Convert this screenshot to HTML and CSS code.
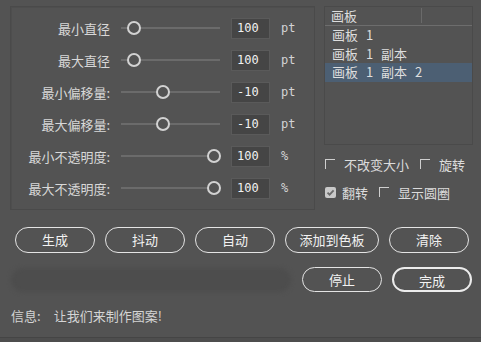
FILE: index.html
```html
<!DOCTYPE html>
<html lang="zh">
<head>
<meta charset="utf-8">
<link rel="stylesheet" href="styles.css">
</head>
<body>
<div class="app">
  <div class="top">
    <div class="params">
      <div class="row">
        <div class="label">最小直径</div>
        <div class="slider"><span class="knob" style="left: 6px"></span></div>
        <div class="field">100</div>
        <div class="unit">pt</div>
      </div>
      <div class="row">
        <div class="label">最大直径</div>
        <div class="slider"><span class="knob" style="left: 6px"></span></div>
        <div class="field">100</div>
        <div class="unit">pt</div>
      </div>
      <div class="row">
        <div class="label">最小偏移量:</div>
        <div class="slider"><span class="knob" style="left: 35px"></span></div>
        <div class="field">-10</div>
        <div class="unit">pt</div>
      </div>
      <div class="row">
        <div class="label">最大偏移量:</div>
        <div class="slider"><span class="knob" style="left: 35px"></span></div>
        <div class="field">-10</div>
        <div class="unit">pt</div>
      </div>
      <div class="row">
        <div class="label">最小不透明度:</div>
        <div class="slider"><span class="knob" style="left: 86px"></span></div>
        <div class="field">100</div>
        <div class="unit">%</div>
      </div>
      <div class="row">
        <div class="label">最大不透明度:</div>
        <div class="slider"><span class="knob" style="left: 86px"></span></div>
        <div class="field">100</div>
        <div class="unit">%</div>
      </div>
    </div>
    <div class="side">
      <div class="list">
        <div class="list-head"><span class="head-cell">画板</span><span class="head-rest"></span></div>
        <div class="item">画板 1</div>
        <div class="item">画板 1 副本</div>
        <div class="item selected">画板 1 副本 2</div>
      </div>
      <div class="checks">
        <div class="check-row">
          <label class="check"><span class="box"></span>不改变大小</label>
          <label class="check second"><span class="box"></span>旋转</label>
        </div>
        <div class="check-row">
          <label class="check"><span class="box checked"><svg viewBox="0 0 11 11" width="11" height="11"><path d="M2.5 5.6 L4.6 7.7 L8.6 3.4" fill="none" stroke="#6a6a6a" stroke-width="1.8"/></svg></span>翻转</label>
          <label class="check third"><span class="box"></span>显示圆圈</label>
        </div>
      </div>
    </div>
  </div>
  <div class="buttons">
    <button class="btn">生成</button>
    <button class="btn">抖动</button>
    <button class="btn">自动</button>
    <button class="btn wide">添加到色板</button>
    <button class="btn">清除</button>
  </div>
  <div class="progress-row">
    <div class="progress"></div>
    <button class="btn">停止</button>
    <button class="btn primary">完成</button>
  </div>
  <div class="info"><span class="info-label">信息:</span><span>让我们来制作图案!</span></div>
  <div class="footer"></div>
</div>
</body>
</html>
```

FILE: styles.css
```css
html, body {
  margin: 0;
  padding: 0;
  background: #535353;
}
body {
  width: 481px;
  height: 342px;
  overflow: hidden;
  font-family: "Noto Sans CJK SC", "Noto Sans", sans-serif;
  color: #d8d8d8;
}
.app {
  padding-top: 6px;
  height: 342px;
  box-sizing: border-box;
  display: flex;
  flex-direction: column;
}
.top {
  display: flex;
  padding-left: 10px;
  height: 204px;
}
.params {
  width: 305px;
  height: 204px;
  box-sizing: border-box;
  border: 1px solid #4a4a4a;
  box-shadow: inset 1px 1px 0 #4e4e4e;
  padding-top: 5px;
}
.row {
  display: flex;
  align-items: center;
  height: 32px;
}
.label {
  width: 99px;
  text-align: right;
  font-size: 13px;
  color: #d8d8d8;
  white-space: nowrap;
}
.slider {
  position: relative;
  margin-left: 11px;
  width: 99px;
  height: 2px;
  background: #6b6b6b;
}
.knob {
  position: absolute;
  top: -6px;
  width: 10px;
  height: 10px;
  border: 2px solid #d2d2d2;
  border-radius: 50%;
  background: #535353;
}
.field {
  margin-left: 11px;
  width: 39px;
  height: 21px;
  box-sizing: border-box;
  background: #454545;
  border: 1px solid #5a5a5a;
  font-family: "DejaVu Sans Mono", monospace;
  font-size: 12px;
  color: #f2f2f2;
  line-height: 19px;
  padding-left: 5px;
}
.unit {
  margin-left: 11px;
  font-family: "DejaVu Sans Mono", monospace;
  font-size: 12px;
  color: #d4d4d4;
}
.side {
  margin-left: 9px;
  width: 149px;
  display: flex;
  flex-direction: column;
}
.list {
  height: 139px;
  box-sizing: border-box;
  border: 1px solid #4a4a4a;
  font-size: 13px;
  color: #dedede;
}
.list-head {
  display: flex;
  height: 19px;
  border-bottom: 1px solid #6d6d6d;
  box-sizing: border-box;
}
.head-cell {
  width: 97px;
  padding-left: 6px;
  box-sizing: border-box;
  border-right: 1px solid #6a6a6a;
  margin: 1px 0 2px;
  line-height: 15px;
}
.item {
  height: 18.5px;
  line-height: 18.5px;
  padding-left: 7px;
  white-space: pre;
  word-spacing: 5px;
}
.item.selected {
  background: #4c5f73;
}
.checks {
  padding-top: 5px;
  font-size: 13px;
  color: #dcdcdc;
}
.check-row {
  display: flex;
  align-items: center;
  height: 28px;
}
.check {
  display: flex;
  align-items: center;
}
.box {
  width: 9px;
  height: 9px;
  border-top: 1px solid #cfcfcf;
  border-left: 1px solid #cfcfcf;
  margin-left: 1px;
  margin-right: 9px;
}
.box.checked {
  width: 11px;
  height: 11px;
  border: none;
  background: #c9c9c9;
  border-radius: 2px;
  margin-right: 6px;
  display: flex;
}
.check.second {
  margin-left: 10px;
}
.check.third {
  margin-left: 10px;
}
.buttons {
  display: flex;
  gap: 10px;
  padding-left: 15px;
  margin-top: 17px;
}
.btn {
  width: 80px;
  height: 26px;
  box-sizing: border-box;
  border: 1px solid #e4e4e4;
  border-radius: 13px;
  background: transparent;
  color: #f2f2f2;
  font-family: "Noto Sans CJK SC", sans-serif;
  font-size: 13px;
  padding: 0;
  line-height: 24px;
}
.btn.wide {
  width: 94px;
}
.btn.primary {
  border: 2px solid #ececec;
}
.progress-row {
  display: flex;
  align-items: center;
  margin-top: 14px;
  padding-left: 11px;
}
.progress-row .btn {
  height: 25px;
  line-height: 23px;
}
.progress {
  width: 280px;
  height: 24px;
  border-radius: 12px;
  background: #4d4d4d;
  filter: blur(2px);
  margin-right: 11px;
}
.progress-row .primary {
  margin-left: 10px;
}
.info {
  margin-top: 15px;
  padding-left: 11px;
  font-size: 13px;
  color: #d4d4d4;
  line-height: 18px;
}
.info-label {
  margin-right: 13px;
}
.footer {
  margin-top: auto;
  height: 4px;
  border-top: 1px solid #454545;
  background: #4e4e4e;
}
```
